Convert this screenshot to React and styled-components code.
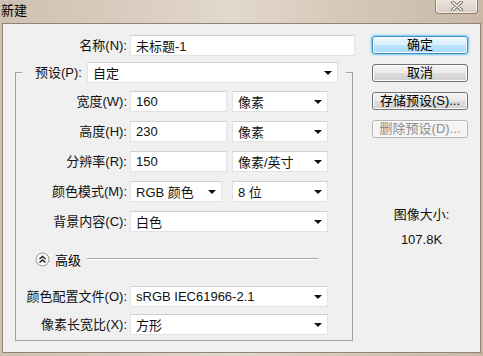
import React from "react";
import styled, { createGlobalStyle } from "styled-components";

const GlobalStyle = createGlobalStyle`
  html, body {
    margin: 0;
    padding: 0;
    background: #d2c4b4;
  }
  body {
    font-family: "Liberation Sans", "Noto Sans CJK SC", sans-serif;
    font-size: 13px;
    color: #000;
  }
`;

const Window = styled.div`
  width: 483px;
  height: 356px;
  box-sizing: border-box;
  padding: 0 2px 3px 2px;
  display: flex;
  flex-direction: column;
  background: linear-gradient(
    90deg,
    #cfc1b1 0%,
    #d8ccbe 25%,
    #e2d8cc 48%,
    #d6c9ba 70%,
    #c9b8a5 100%
  );
`;

const TitleBar = styled.div`
  height: 23px;
  display: flex;
  align-items: flex-start;
  justify-content: space-between;
`;

const Title = styled.span`
  font-family: "Noto Sans CJK SC", sans-serif;
  font-size: 13px;
  line-height: 20px;
  margin-left: -1px;
`;

const CloseButton = styled.div`
  width: 43px;
  height: 15px;
  margin-top: -1px;
  margin-right: 3px;
  box-sizing: border-box;
  border: 1px solid #8d8173;
  border-top: none;
  border-radius: 0 0 4px 4px;
  background: linear-gradient(#ece6df, #d8cec3);
  box-shadow: inset 0 0 0 1px rgba(255, 255, 255, 0.6);
  display: flex;
  align-items: center;
  justify-content: center;
`;

const Panel = styled.div`
  flex: 1;
  display: flex;
  border: 1px solid #8f8577;
  background: #f0f0f0;
`;

const FormColumn = styled.div`
  width: 352px;
  display: flex;
  flex-direction: column;
`;

const NameRow = styled.div`
  display: grid;
  grid-template-columns: 124px 225px;
  column-gap: 3px;
  align-items: center;
  margin-top: 11px;
`;

const Label = styled.span`
  text-align: right;
  white-space: nowrap;
  font-size: 13px;
  line-height: 21px;
  color: #111;
`;

const Field = styled.div`
  height: 21px;
  width: ${(p) => p.$w || 97}px;
  box-sizing: border-box;
  border: 1px solid #e2e2e2;
  border-top-color: #cfcfcf;
  background: #fff;
  padding-left: ${(p) => p.$pad ?? 5}px;
  display: flex;
  align-items: center;
  position: relative;
  font-size: 13px;
  white-space: nowrap;
  color: #111;

  ${(p) =>
    p.$select &&
    `
    &::after {
      content: "";
      position: absolute;
      right: 5px;
      top: 8px;
      border-left: 4px solid transparent;
      border-right: 4px solid transparent;
      border-top: 4px solid #111;
    }
  `}
`;

const Group = styled.fieldset`
  margin: 6px 0 0 12px;
  padding: 0 0 5px 0;
  width: 338px;
  box-sizing: border-box;
  border: 1px solid #a3a3a3;
  min-width: 0;
`;

const Legend = styled.legend`
  margin-left: 6px;
  padding: 0 8px 0 13px;
  display: flex;
  align-items: center;
  gap: 5px;
`;

const Rows = styled.div`
  display: grid;
  grid-template-columns: 111px auto;
  column-gap: 3px;
  row-gap: ${(p) => p.$gap}px;
  align-items: center;
  margin-top: ${(p) => p.$top}px;
`;

const Pair = styled.div`
  display: flex;
  gap: ${(p) => p.$gap || 5}px;
`;

const AdvancedRow = styled.div`
  display: flex;
  align-items: center;
  margin: 17px 0 0 19px;
  height: 20px;
`;

const AdvancedText = styled.span`
  margin-left: 5px;
  font-size: 13px;
`;

const Rule = styled.div`
  flex: none;
  width: 232px;
  margin-left: 6px;
  height: 0;
  border-top: 1px solid #a8a8a8;
  border-bottom: 1px solid #fff;
`;

const SideColumn = styled.div`
  flex: 1;
  display: flex;
  flex-direction: column;
  padding: 12px 0 0 17px;
`;

const Button = styled.div`
  width: 96px;
  height: 18px;
  box-sizing: border-box;
  margin-bottom: 10px;
  border-radius: 3px;
  border: 1px solid ${(p) => (p.$primary ? "#3c8fc4" : p.$disabled ? "#b5b5b5" : "#707070")};
  background: ${(p) =>
    p.$primary
      ? "linear-gradient(#eaf6fd 0%, #d9f0fc 50%, #bee6fd 51%, #a7d9f5 100%)"
      : p.$disabled
      ? "#f4f4f4"
      : "linear-gradient(#f2f2f2 0%, #ebebeb 50%, #dddddd 51%, #cfcfcf 100%)"};
  box-shadow: ${(p) =>
    p.$primary ? "0 0 2px 1px #6ec8f0, inset 0 0 0 1px #fff" : "inset 0 0 0 1px #fcfcfc"};
  color: ${(p) => (p.$disabled ? "#8d8d8d" : "#000")};
  display: flex;
  align-items: center;
  justify-content: center;
  font-size: 13px;
  line-height: 16px;
`;

const SizeInfo = styled.div`
  margin: 56px 0 0 -17px;
  display: flex;
  flex-direction: column;
  align-items: center;
  gap: 9px;
  padding-left: 8px;
  font-size: 13px;
  color: #111;
`;

const AdvancedIcon = () => (
  <svg width="15" height="15" viewBox="0 0 15 15">
    <circle cx="7.5" cy="7.5" r="6.5" fill="#f7f7f7" stroke="#9a9a9a" />
    <path d="M4.5 7 L7.5 4.5 L10.5 7 M4.5 10.5 L7.5 8 L10.5 10.5" fill="none" stroke="#222" strokeWidth="1.4" />
  </svg>
);

const CloseIcon = () => (
  <svg width="12" height="10" viewBox="0 0 12 10">
    <path d="M1.5 1 L10.5 9 M10.5 1 L1.5 9" stroke="#6d6358" strokeWidth="3.2" strokeLinecap="round" />
    <path d="M1.5 1 L10.5 9 M10.5 1 L1.5 9" stroke="#fff" strokeWidth="1.6" strokeLinecap="round" />
  </svg>
);

const App = () => (
  <>
    <GlobalStyle />
    <Window>
      <TitleBar>
        <Title>新建</Title>
        <CloseButton>
          <CloseIcon />
        </CloseButton>
      </TitleBar>
      <Panel>
        <FormColumn>
          <NameRow>
            <Label>名称(N):</Label>
            <Field $w={225}>未标题-1</Field>
          </NameRow>
          <Group>
            <Legend>
              <Label>预设(P):</Label>
              <Field $w={251} $select>自定</Field>
            </Legend>
            <Rows $top={8} $gap={9}>
              <Label>宽度(W):</Label>
              <Pair>
                <Field $w={97}>160</Field>
                <Field $w={96} $select>像素</Field>
              </Pair>
              <Label>高度(H):</Label>
              <Pair>
                <Field $w={97}>230</Field>
                <Field $w={96} $select>像素</Field>
              </Pair>
              <Label>分辨率(R):</Label>
              <Pair>
                <Field $w={97}>150</Field>
                <Field $w={96} $select>像素/英寸</Field>
              </Pair>
              <Label>颜色模式(M):</Label>
              <Pair $gap={10}>
                <Field $w={92} $select>RGB 颜色</Field>
                <Field $w={96} $select>8 位</Field>
              </Pair>
              <Label>背景内容(C):</Label>
              <Field $w={198} $select>白色</Field>
            </Rows>
            <AdvancedRow>
              <AdvancedIcon />
              <AdvancedText>高级</AdvancedText>
              <Rule />
            </AdvancedRow>
            <Rows $top={17} $gap={7}>
              <Label>颜色配置文件(O):</Label>
              <Field $w={198} $select>sRGB IEC61966-2.1</Field>
              <Label>像素长宽比(X):</Label>
              <Field $w={198} $select>方形</Field>
            </Rows>
          </Group>
        </FormColumn>
        <SideColumn>
          <Button $primary>确定</Button>
          <Button>取消</Button>
          <Button>存储预设(S)...</Button>
          <Button $disabled>删除预设(D)...</Button>
          <SizeInfo>
            <span>图像大小:</span>
            <span>107.8K</span>
          </SizeInfo>
        </SideColumn>
      </Panel>
    </Window>
  </>
);

export default App;
